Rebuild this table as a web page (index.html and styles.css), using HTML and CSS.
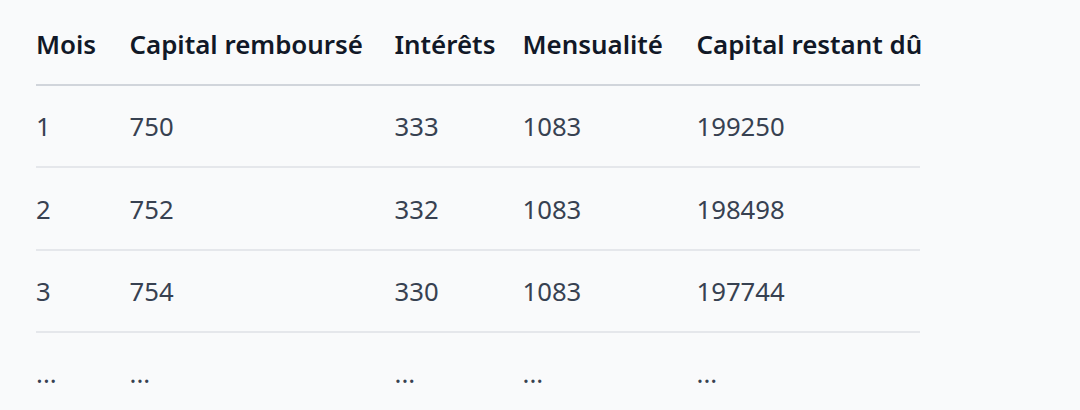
FILE: index.html
```html
<!DOCTYPE html>
<html lang="fr">
<head>
<meta charset="utf-8">
<link rel="stylesheet" href="styles.css">
</head>
<body>
<div class="wrap">
<table class="amort">
<colgroup>
<col class="c1"><col class="c2"><col class="c3"><col class="c4"><col class="c5">
</colgroup>
<thead>
<tr><th>Mois</th><th>Capital remboursé</th><th>Intérêts</th><th>Mensualité</th><th>Capital restant dû</th></tr>
</thead>
<tbody>
<tr><td>1</td><td>750</td><td>333</td><td>1083</td><td>199250</td></tr>
<tr><td>2</td><td>752</td><td>332</td><td>1083</td><td>198498</td></tr>
<tr><td>3</td><td>754</td><td>330</td><td>1083</td><td>197744</td></tr>
<tr><td>...</td><td>...</td><td>...</td><td>...</td><td>...</td></tr>
</tbody>
</table>
</div>
</body>
</html>
```
FILE: styles.css
```css
html, body {
  margin: 0;
  padding: 0;
  background: #f9fafb;
}
.wrap {
  padding: 22px 0 0 36px;
  font-family: "Noto Sans", "Open Sans", sans-serif;
  font-size: 25.7px;
  color: #374151;
}
.amort {
  width: 884px;
  table-layout: fixed;
  border-collapse: collapse;
}
.c1 { width: 77.5px; }
.c2 { width: 265px; }
.c3 { width: 128px; }
.c4 { width: 174px; }
.c5 { width: 239.5px; }
.amort th, .amort td {
  text-align: left;
  padding: 19.3px 16px 17px;
  line-height: 44px;
  white-space: nowrap;
}
.amort th {
  padding-top: 0;
  padding-bottom: 18px;
  font-size: 25.9px;
  font-weight: 600;
  color: #111827;
  border-bottom: 2px solid #d1d5db;
}
.amort td {
  border-bottom: 2px solid #e5e7eb;
}
.amort th:first-child, .amort td:first-child { padding-left: 0; }
.amort th:last-child, .amort td:last-child { padding-right: 0; }
```
